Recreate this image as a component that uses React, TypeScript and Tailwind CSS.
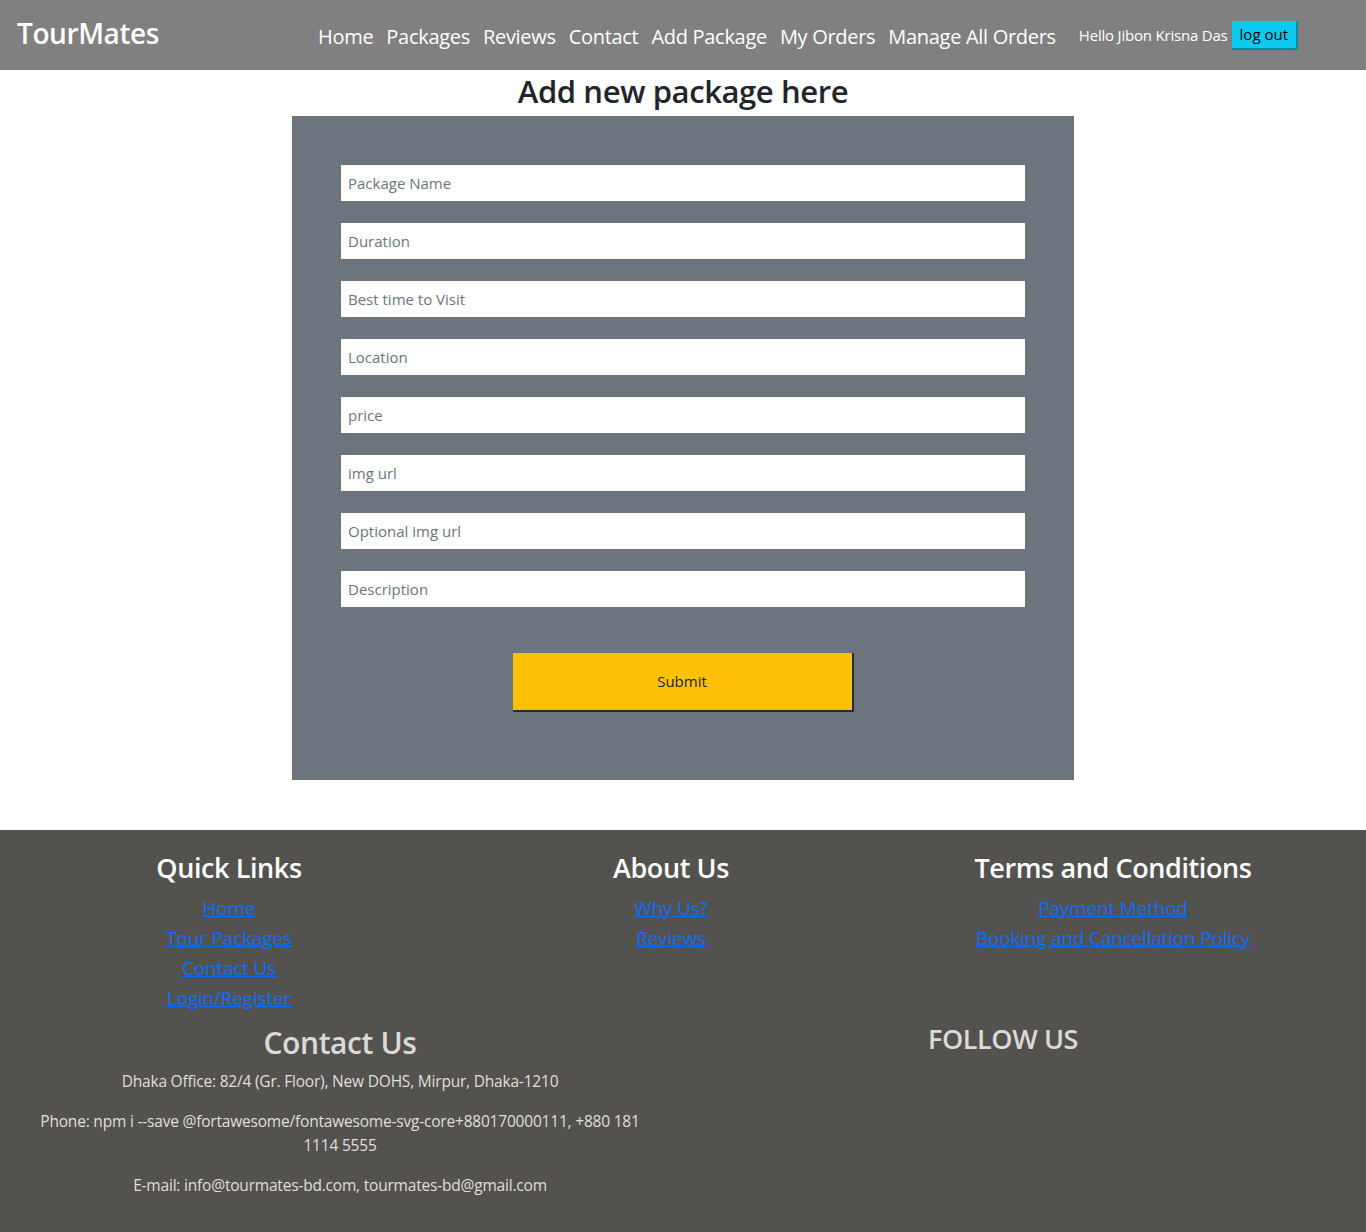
import React from 'react'

const font = { fontFamily: '"Open Sans", "Noto Sans", sans-serif' }

export default function App() {
  const navLinks = ['Home', 'Packages', 'Reviews', 'Contact', 'Add Package', 'My Orders', 'Manage All Orders']
  const fields = [
    'Package Name',
    'Duration',
    'Best time to Visit',
    'Location',
    'price',
    'img url',
    'Optional img url',
    'Description',
  ]

  return (
    <div className="min-h-[1232px] bg-white text-[#212529]" style={font}>
      {/* Navbar */}
      <nav className="flex h-[70px] items-center bg-[#808080] pl-[17px] pr-[68px]">
        <a className="mb-[4px] text-[28px] font-semibold tracking-[-0.4px] text-white">TourMates</a>
        <div className="ml-auto flex items-center">
          <div className="flex items-center gap-[13px] pt-[3px]">
            {navLinks.map((l) => (
              <a key={l} className="text-[20px] tracking-[-0.3px] text-white">
                {l}
              </a>
            ))}
          </div>
          <span className="ml-[23px] text-[15px] tracking-[-0.2px] text-white">Hello Jibon Krisna Das</span>
          <button className="ml-[4px] h-[29px] border-r-2 border-b-2 border-[#0a8ea8] bg-[#0dcaf0] px-[8px] text-[15px] text-black">
            log out
          </button>
        </div>
      </nav>

      {/* Form */}
      <main className="flex flex-col items-center pb-[50px]">
        <h2 className="text-[31px] font-semibold leading-[42px] tracking-[-0.4px] text-[#212529]">
          Add new package here
        </h2>
        <form className="mt-[4px] w-[782px] bg-[#6c757d] px-[49px] pt-[49px] pb-[68px]">
          <div className="flex flex-col gap-[22px]">
            {fields.map((f) => (
              <input
                key={f}
                placeholder={f}
                className="h-[36px] w-full bg-white px-[7px] text-[15px] text-[#212529] outline-none placeholder:text-[#6c757d]"
              />
            ))}
          </div>
          <div className="mt-[46px] flex justify-center">
            <button
              type="button"
              className="h-[59px] w-[341px] border-r-2 border-b-2 border-[#2b2b2b] bg-[#ffc107] text-[15px] text-[#212529]"
            >
              Submit
            </button>
          </div>
        </form>
      </main>

      {/* Footer */}
      <footer className="h-[402px] bg-[#53524f] pt-[20px]">
        <div className="grid grid-cols-[442px_442px_442px] pl-[8px]">
          <div className="flex flex-col items-center">
            <h3 className="text-[27px] font-semibold leading-[36px] tracking-[-0.4px] text-white">Quick Links</h3>
            <div className="mt-[7px] flex flex-col items-center">
              {['Home', 'Tour Packages', 'Contact Us', 'Login/Register'].map((l) => (
                <a key={l} className="text-[19px] leading-[30px] tracking-[-0.2px] text-[#0d6efd] underline">
                  {l}
                </a>
              ))}
            </div>
          </div>
          <div className="flex flex-col items-center">
            <h3 className="text-[27px] font-semibold leading-[36px] tracking-[-0.4px] text-white">About Us</h3>
            <div className="mt-[7px] flex flex-col items-center">
              {['Why Us?', 'Reviews'].map((l) => (
                <a key={l} className="text-[19px] leading-[30px] tracking-[-0.2px] text-[#0d6efd] underline">
                  {l}
                </a>
              ))}
            </div>
          </div>
          <div className="flex flex-col items-center">
            <h3 className="text-[27px] font-semibold leading-[36px] tracking-[-0.4px] text-white">Terms and Conditions</h3>
            <div className="mt-[7px] flex flex-col items-center">
              {['Payment Method', 'Booking and Cancellation Policy'].map((l) => (
                <a key={l} className="text-[19px] leading-[30px] tracking-[-0.2px] text-[#0d6efd] underline">
                  {l}
                </a>
              ))}
            </div>
          </div>
        </div>

        <div className="mt-[8px] grid grid-cols-[680px_646px]">
          <div className="flex flex-col items-center px-[30px] text-center">
            <h3 className="text-[30px] font-semibold leading-[44px] tracking-[-0.4px] text-[#dcd9d9]">Contact Us</h3>
            <p className="mt-[4px] text-[15.5px] leading-[24px] tracking-[-0.2px] text-[#e0dede]">
              Dhaka Office: 82/4 (Gr. Floor), New DOHS, Mirpur, Dhaka-1210
            </p>
            <p className="mt-[16px] w-[600px] text-[15.5px] leading-[24px] tracking-[-0.2px] text-[#e0dede]">
              Phone: npm i --save @fortawesome/fontawesome-svg-core+880170000111, +880 181 1114 5555
            </p>
            <p className="mt-[16px] text-[15.5px] leading-[24px] tracking-[-0.2px] text-[#e0dede]">
              E-mail: info@tourmates-bd.com, tourmates-bd@gmail.com
            </p>
          </div>
          <div className="flex flex-col items-center">
            <h3 className="text-[27px] font-semibold leading-[36px] tracking-[-0.4px] text-[#dcd9d9]">FOLLOW US</h3>
          </div>
        </div>
      </footer>
    </div>
  )
}
